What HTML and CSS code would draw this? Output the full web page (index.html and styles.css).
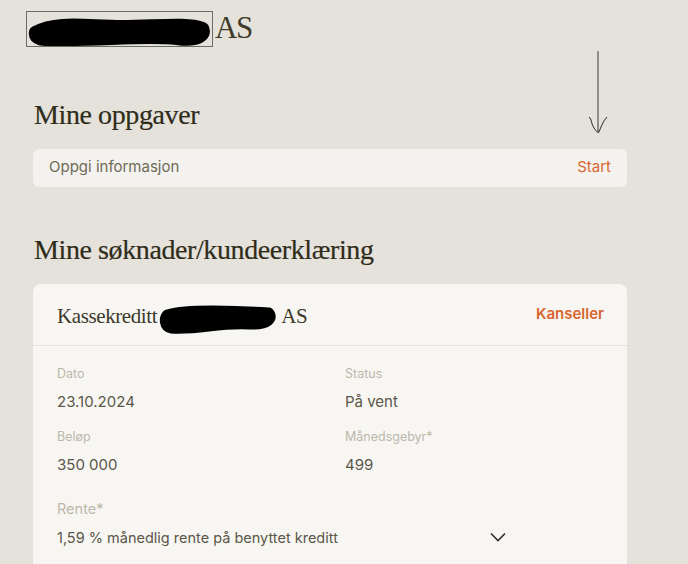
FILE: index.html
```html
<!DOCTYPE html>
<html lang="no">
<head>
<meta charset="utf-8">
<title>Mine oppgaver</title>
<link rel="stylesheet" href="styles.css">
</head>
<body>
<div class="page">
  <header class="brand">
    <span class="redact-box">
      <svg class="blob" width="185" height="34" viewBox="0 0 185 34"><path d="M8 20 C 30 8, 60 14, 95 14 C 130 14, 160 10, 176 16 C 180 24, 170 30, 150 27 C 120 24, 80 28, 40 28 C 20 28, 6 30, 8 20 Z" fill="#000" stroke="#000" stroke-width="12" stroke-linejoin="round"/></svg>
    </span>
    <span class="brand-suffix">AS</span>
  </header>

  <svg class="arrow" width="30" height="90" viewBox="0 0 30 90"><path d="M15 2 L15 84" stroke="#8f8e89" stroke-width="2" fill="none"/><path d="M6 68 C 9 70, 8 75, 11 79 C 13 82, 15 84, 16 83 C 18 78, 20 72, 24 68" stroke="#2a2a2a" stroke-width="1" fill="none"/></svg>

  <h2 class="section-title first">Mine oppgaver</h2>
  <div class="task">
    <span class="task-name">Oppgi informasjon</span>
    <span class="link">Start</span>
  </div>

  <h2 class="section-title second">Mine søknader/kundeerklæring</h2>
  <section class="card">
    <div class="card-head">
      <div class="card-title">Kassekreditt<svg class="blob small" width="120" height="34" viewBox="0 0 120 34"><path d="M8 14 C 30 8, 70 10, 110 12 C 116 18, 110 26, 90 25 C 60 23, 40 31, 12 29 C 4 27, 4 18, 8 14 Z" fill="#000" stroke="#000" stroke-width="9" stroke-linejoin="round"/></svg>AS</div>
      <span class="link strong">Kanseller</span>
    </div>
    <div class="card-body">
      <div class="fields">
        <div class="field"><div class="label">Dato</div><div class="value">23.10.2024</div></div>
        <div class="field"><div class="label">Status</div><div class="value">På vent</div></div>
        <div class="field"><div class="label">Beløp</div><div class="value">350 000</div></div>
        <div class="field"><div class="label">Månedsgebyr*</div><div class="value">499</div></div>
      </div>
      <div class="label big">Rente*</div>
      <div class="select">
        <span>1,59 % månedlig rente på benyttet kreditt</span>
        <svg width="16" height="10" viewBox="0 0 16 10"><path d="M1 1.5 L8 8.5 L15 1.5" stroke="#2e2d28" stroke-width="1.6" fill="none"/></svg>
      </div>
    </div>
  </section>
</div>
</body>
</html>
```

FILE: styles.css
```css
html, body {
  margin: 0;
  padding: 0;
  background: #e5e2db;
  overflow: hidden;
}
body {
  font-family: Inter, "Noto Sans", sans-serif;
  color: #5d594a;
  height: 564px;
}
.page {
  position: relative;
  width: 594px;
  margin-left: 33px;
  padding-top: 11px;
}
.brand {
  display: flex;
  align-items: flex-end;
  margin-left: -7px;
  height: 36px;
}
.redact-box {
  display: block;
  width: 185px;
  height: 34px;
  border: 1px solid #6c6b65;
}
.blob { display: block; }
.brand-suffix {
  font-family: "Liberation Serif", serif;
  font-size: 31px;
  line-height: 31px;
  letter-spacing: -1.5px;
  color: #3e3b2a;
  margin-left: 2px;
  margin-bottom: 4px;
}
.arrow {
  position: absolute;
  left: 550px;
  top: 49px;
}
.section-title {
  font-family: "Liberation Serif", serif;
  font-weight: normal;
  font-size: 28px;
  letter-spacing: -0.4px;
  line-height: 32px;
  color: #2f2c1a;
  margin: 0;
  padding-left: 1px;
  -webkit-text-stroke: 0.2px #2f2c1a;
}
.section-title.first { margin-top: 52px; }
.section-title.second { margin-top: 47px; }
.task {
  margin-top: 18px;
  height: 38px;
  background: #f4f2ee;
  border-radius: 6px;
  display: flex;
  align-items: center;
  justify-content: space-between;
  padding: 0 16px;
  box-sizing: border-box;
}
.task-name {
  font-size: 15px;
  color: #6e6a58;
  margin-top: -3px;
}
.link {
  color: #d9652f;
  font-size: 15px;
  margin-top: -3px;
}
.link.strong { font-weight: 600; margin-top: -2px; }
.card {
  margin-top: 18px;
  background: #f7f6f3;
  border-radius: 8px 8px 0 0;
  height: 300px;
}
.card-head {
  height: 62px;
  box-sizing: border-box;
  border-bottom: 1px solid #e4e1da;
  display: flex;
  align-items: center;
  justify-content: space-between;
  padding: 0 23px 0 24px;
}
.card-title {
  display: flex;
  align-items: center;
  font-family: "Liberation Serif", serif;
  font-size: 21px;
  letter-spacing: -0.4px;
  color: #3c392a;
  padding-top: 4px;
}
.blob.small { margin: 0 2px 0 2px; }
.card-body {
  padding: 19px 24px 0 24px;
}
.fields {
  display: grid;
  grid-template-columns: 288px 1fr;
  row-gap: 15px;
}
.label {
  font-size: 12.5px;
  line-height: 18px;
  color: #bcb8aa;
}
.label.big {
  font-size: 14.5px;
  line-height: 20px;
  margin-top: 23px;
}
.value {
  margin-top: 8px;
  font-size: 15px;
  line-height: 22px;
  color: #5b5748;
}
.select {
  width: 461px;
  height: 36px;
  display: flex;
  align-items: center;
  justify-content: space-between;
  padding-right: 12px;
  box-sizing: border-box;
  font-size: 14.5px;
  color: #5b5748;
}
```
